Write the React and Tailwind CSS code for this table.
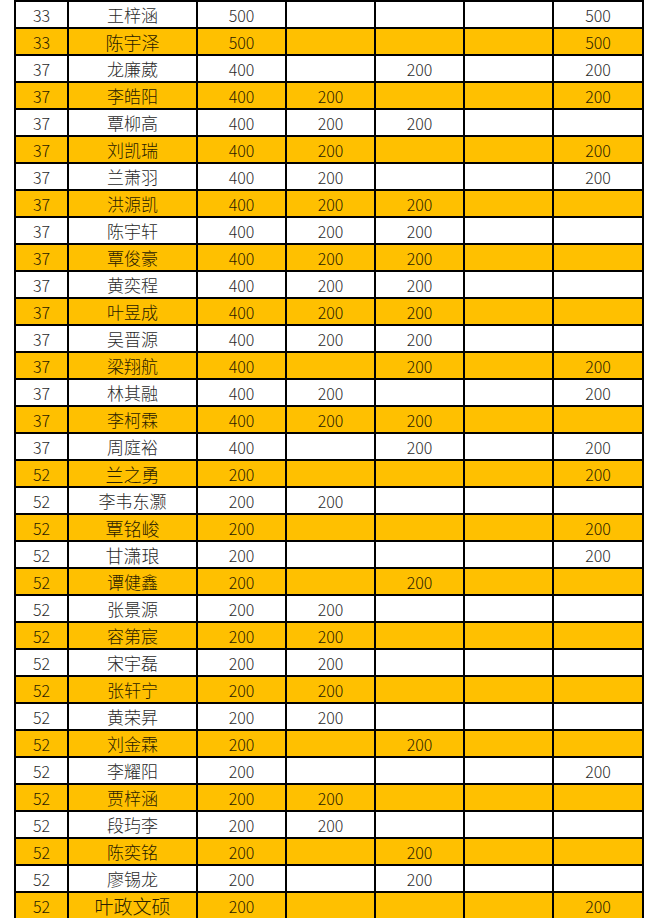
// Score sheet rows — alternating white / gold bands, black grid lines.
const rows = [
  ['33', '王梓涵', '500', '', '', '', '500'],
  ['33', '陈宇泽', '500', '', '', '', '500', 'lg'],
  ['37', '龙廉葳', '400', '', '200', '', '200'],
  ['37', '李皓阳', '400', '200', '', '', '200'],
  ['37', '覃柳高', '400', '200', '200', '', ''],
  ['37', '刘凯瑞', '400', '200', '', '', '200'],
  ['37', '兰萧羽', '400', '200', '', '', '200'],
  ['37', '洪源凯', '400', '200', '200', '', ''],
  ['37', '陈宇轩', '400', '200', '200', '', ''],
  ['37', '覃俊豪', '400', '200', '200', '', ''],
  ['37', '黄奕程', '400', '200', '200', '', ''],
  ['37', '叶昱成', '400', '200', '200', '', ''],
  ['37', '吴晋源', '400', '200', '200', '', ''],
  ['37', '梁翔航', '400', '', '200', '', '200'],
  ['37', '林其融', '400', '200', '', '', '200'],
  ['37', '李柯霖', '400', '200', '200', '', ''],
  ['37', '周庭裕', '400', '', '200', '', '200'],
  ['52', '兰之勇', '200', '', '', '', '200', 'lg'],
  ['52', '李韦东灏', '200', '200', '', '', ''],
  ['52', '覃铭峻', '200', '', '', '', '200', 'lg'],
  ['52', '甘潇琅', '200', '', '', '', '200', 'lg'],
  ['52', '谭健鑫', '200', '', '200', '', ''],
  ['52', '张景源', '200', '200', '', '', ''],
  ['52', '容第宸', '200', '200', '', '', ''],
  ['52', '宋宇磊', '200', '200', '', '', ''],
  ['52', '张轩宁', '200', '200', '', '', ''],
  ['52', '黄荣昇', '200', '200', '', '', ''],
  ['52', '刘金霖', '200', '', '200', '', ''],
  ['52', '李耀阳', '200', '', '', '', '200'],
  ['52', '贾梓涵', '200', '200', '', '', ''],
  ['52', '段玙李', '200', '200', '', '', ''],
  ['52', '陈奕铭', '200', '', '200', '', ''],
  ['52', '廖锡龙', '200', '', '200', '', ''],
  ['52', '叶政文硕', '200', '', '', '', '200', 'xl'],
];

const num = "font-['Noto_Sans_CJK_SC',sans-serif] font-light text-[16px]";
const cjk = "font-['Noto_Sans_CJK_SC',sans-serif] font-light";

export default function App() {
  return (
    <div className="h-[918px] overflow-hidden bg-white">
      <div className="ml-[14px] w-[630px] bg-black p-[2px] grid grid-cols-[51px_127px_87px_87px_87px_87px_88px] gap-[2px]">
        {rows.map((r, i) => {
          const bg = i % 2 === 0 ? 'bg-white text-[#2a2a2a]' : 'bg-[#ffc000] text-[#2a2000]';
          const nameSize = r[7] === 'xl' ? 'text-[19px]' : r[7] === 'lg' ? 'text-[18px]' : 'text-[17px]';
          return [
            <div key={i + 'a'} className={`h-[25px] flex items-center justify-center leading-none ${bg} ${num}`}>{r[0]}</div>,
            <div key={i + 'b'} className={`h-[25px] flex items-center justify-center leading-none ${bg} ${cjk} ${nameSize}`}>{r[1]}</div>,
            ...[2, 3, 4, 5, 6].map((c) => (
              <div key={i + '-' + c} className={`h-[25px] flex items-center justify-center leading-none ${bg} ${num}`}>{r[c]}</div>
            )),
          ];
        })}
      </div>
    </div>
  );
}
